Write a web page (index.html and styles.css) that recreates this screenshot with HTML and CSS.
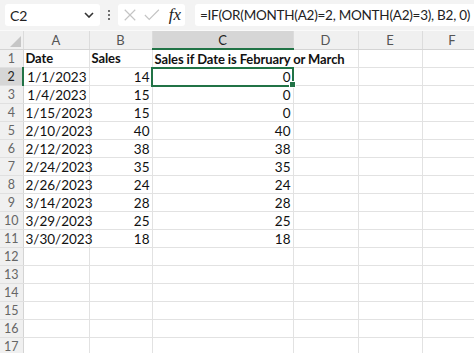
FILE: index.html
```html
<!DOCTYPE html>
<html lang="en">

<head>
    <meta charset="UTF-8">
    <title>Sheet</title>
    <link rel="stylesheet" href="styles.css">
</head>

<body>
    <div class="toolbar">
        <div class="name-box">
            <span>C2</span>
            <svg class="chevron" width="10" height="6" viewBox="0 0 10 6"><path d="M1 1 L5 5 L9 1" fill="none" stroke="#333" stroke-width="1.6"/></svg>
        </div>
        <div class="dots"><i></i><i></i><i></i></div>
        <div class="fx-box">
            <svg width="16" height="16" viewBox="0 0 16 16"><path d="M2 2 L14 14 M14 2 L2 14" stroke="#c4c4c4" stroke-width="1.3"/></svg>
            <svg width="18" height="16" viewBox="0 0 18 16"><path d="M1 8 L6 13 L17 2" fill="none" stroke="#c4c4c4" stroke-width="1.3"/></svg>
            <span class="fx">fx</span>
        </div>
        <div class="formula">=IF(OR(MONTH(A2)=2, MONTH(A2)=3), B2, 0)</div>
    </div>

    <table class="grid">
        <colgroup>
            <col class="c-rh"><col class="c-a"><col class="c-b"><col class="c-c"><col class="c-d"><col class="c-e"><col class="c-f">
        </colgroup>
        <thead>
            <tr>
                <th class="corner"><span class="tri"></span></th>
                <th>A</th><th>B</th><th class="sel-col">C</th><th>D</th><th>E</th><th>F</th>
            </tr>
        </thead>
        <tbody>
            <tr><td class="rh">1</td><td class="bold">Date</td><td class="bold">Sales</td><td class="bold" colspan="2">Sales if Date is February or March</td><td></td><td></td></tr>
            <tr><td class="rh sel-row">2</td><td class="num">1/1/2023</td><td class="num">14</td><td class="num active">0<span class="handle"></span></td><td></td><td></td><td></td></tr>
            <tr><td class="rh">3</td><td class="num">1/4/2023</td><td class="num">15</td><td class="num">0</td><td></td><td></td><td></td></tr>
            <tr><td class="rh">4</td><td class="num">1/15/2023</td><td class="num">15</td><td class="num">0</td><td></td><td></td><td></td></tr>
            <tr><td class="rh">5</td><td class="num">2/10/2023</td><td class="num">40</td><td class="num">40</td><td></td><td></td><td></td></tr>
            <tr><td class="rh">6</td><td class="num">2/12/2023</td><td class="num">38</td><td class="num">38</td><td></td><td></td><td></td></tr>
            <tr><td class="rh">7</td><td class="num">2/24/2023</td><td class="num">35</td><td class="num">35</td><td></td><td></td><td></td></tr>
            <tr><td class="rh">8</td><td class="num">2/26/2023</td><td class="num">24</td><td class="num">24</td><td></td><td></td><td></td></tr>
            <tr><td class="rh">9</td><td class="num">3/14/2023</td><td class="num">28</td><td class="num">28</td><td></td><td></td><td></td></tr>
            <tr><td class="rh">10</td><td class="num">3/29/2023</td><td class="num">25</td><td class="num">25</td><td></td><td></td><td></td></tr>
            <tr><td class="rh">11</td><td class="num">3/30/2023</td><td class="num">18</td><td class="num">18</td><td></td><td></td><td></td></tr>
            <tr><td class="rh">12</td><td></td><td></td><td></td><td></td><td></td><td></td></tr>
            <tr><td class="rh">13</td><td></td><td></td><td></td><td></td><td></td><td></td></tr>
            <tr><td class="rh">14</td><td></td><td></td><td></td><td></td><td></td><td></td></tr>
            <tr><td class="rh">15</td><td></td><td></td><td></td><td></td><td></td><td></td></tr>
            <tr><td class="rh">16</td><td></td><td></td><td></td><td></td><td></td><td></td></tr>
            <tr><td class="rh">17</td><td></td><td></td><td></td><td></td><td></td><td></td></tr>
        </tbody>
    </table>
</body>

</html>
```

FILE: styles.css
```css
body {
    margin: 0;
    background-color: #fff;
    font-family: Lato, "Open Sans", sans-serif;
    color: #111;
    overflow: hidden;
}

/* top formula bar */
.toolbar {
    display: flex;
    align-items: center;
    height: 30px;
    padding: 0 0 0 5px;
    background-color: #f3f3f3;
    border-bottom: 1px solid #fafafa;
}

.toolbar > * {
    flex-shrink: 0;
}

.name-box {
    display: flex;
    align-items: center;
    justify-content: space-between;
    width: 95px;
    height: 22px;
    padding: 0 6px 0 5px;
    box-sizing: border-box;
    background-color: #fff;
    border-radius: 3px;
    font-size: 14px;
    color: #222;
}

.dots {
    display: flex;
    flex-direction: column;
    gap: 2px;
    width: 18px;
    align-items: center;
}

.dots i {
    width: 2px;
    height: 2px;
    background-color: #444;
    border-radius: 1px;
}

.fx-box {
    display: flex;
    align-items: center;
    gap: 7px;
    width: 67px;
    height: 22px;
    padding: 0 4px 0 5px;
    box-sizing: border-box;
    background-color: #fff;
    border-radius: 3px;
}

.fx {
    font-family: "Liberation Serif", serif;
    font-style: italic;
    font-size: 17px;
    color: #222;
    margin-left: 2px;
}

.toolbar .formula {
    flex: 1 1 0;
    min-width: 0;
    height: 22px;
    margin-left: 10px;
    padding-left: 5px;
    background-color: #fff;
    border-radius: 3px 0 0 3px;
    font-size: 13.5px;
    letter-spacing: -0.25px;
    line-height: 22px;
    color: #222;
    white-space: nowrap;
    overflow: hidden;
}

/* sheet grid */
.grid {
    border-collapse: collapse;
    table-layout: fixed;
    width: 482px;
}

.c-rh { width: 23px; }
.c-a { width: 66px; }
.c-b { width: 63px; }
.c-c { width: 141px; }
.c-d { width: 65px; }
.c-e { width: 64px; }
.c-f { width: 60px; }

.grid th {
    height: 17px;
    padding: 0;
    background-color: #f0f0f0;
    border-right: 1px solid #dcdcdc;
    border-bottom: 1px solid #d4d4d4;
    font-weight: normal;
    font-size: 13px;
    color: #555;
}

.grid th.sel-col {
    background-color: #d6d6d6;
    border-bottom: 2px solid #217346;
    color: #222;
}

.corner {
    position: relative;
}

.tri {
    position: absolute;
    right: 2px;
    bottom: 2px;
    width: 0;
    height: 0;
    border-left: 11px solid transparent;
    border-bottom: 11px solid #c6c6c6;
}

.grid td {
    height: 17px;
    padding: 0 2px;
    border-right: 1px solid #e2e2e2;
    border-bottom: 1px solid #e2e2e2;
    font-size: 13.5px;
    white-space: nowrap;
}

.grid td.rh {
    padding: 0;
    background-color: #f0f0f0;
    border-right: 1px solid #d4d4d4;
    border-bottom: 1px solid #e0e0e0;
    text-align: center;
    font-size: 12.5px;
    color: #666;
}

.grid td.sel-row {
    background-color: #d6d6d6;
    border-right: 2px solid #217346;
    color: #222;
}

.grid td.bold {
    font-weight: bold;
    font-size: 13px;
    letter-spacing: -0.1px;
}

.num {
    text-align: right;
}

.grid td.active {
    position: relative;
    outline: 2px solid #217346;
    outline-offset: -1px;
}

.handle {
    position: absolute;
    right: -3px;
    bottom: -3px;
    width: 5px;
    height: 5px;
    background-color: #217346;
    border: 1px solid #fff;
}
```
